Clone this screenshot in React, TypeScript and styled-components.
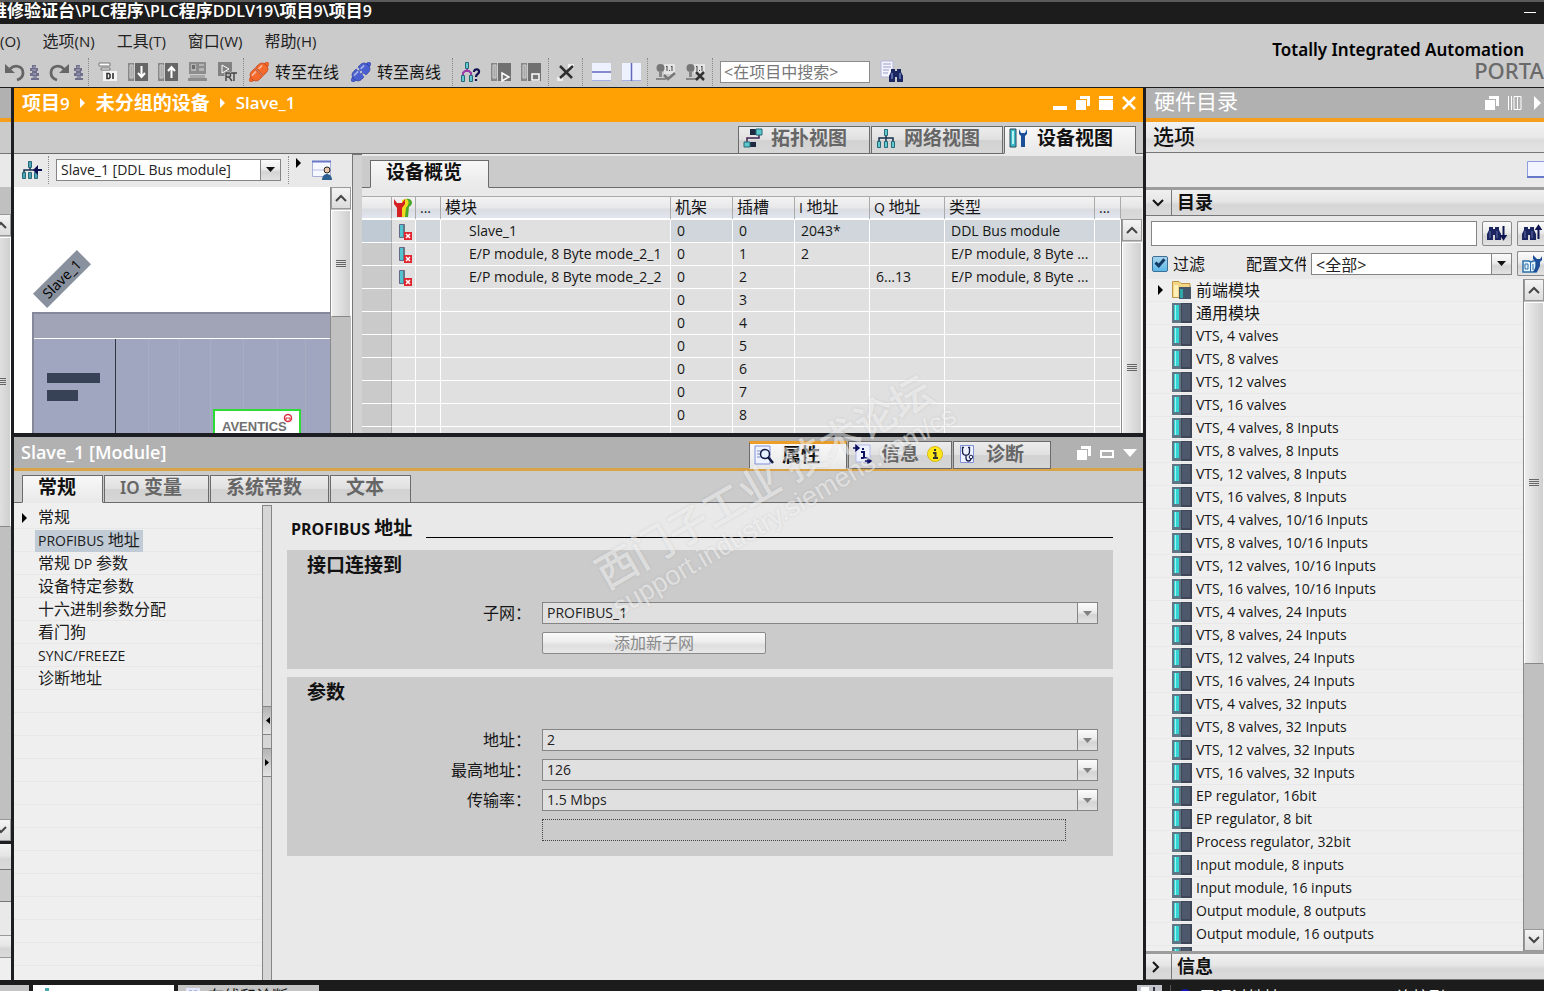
import React from 'react';
import styled, { createGlobalStyle, css } from 'styled-components';

const latin = '"Open Sans", "Noto Sans CJK SC", sans-serif';
const display = '"Noto Sans", "Noto Sans CJK SC", sans-serif';

const GlobalStyle = createGlobalStyle`
  *, *::before, *::after { box-sizing: border-box; }
  body { margin: 0; overflow: hidden; background: #1c1e22; font-family: ${latin}; font-size: 14px; color: #161616; }
  button, input, select { font-family: inherit; font-size: inherit; color: inherit; margin: 0; padding: 0; border-radius: 0; }
  button { border: 0; background: none; cursor: pointer; }
  svg { display: block; flex: none; }
  h1, h2, h3, ul { margin: 0; padding: 0; font-size: inherit; font-weight: inherit; list-style: none; }
`;

const bar = 'linear-gradient(#f0f0f0, #e6e6e6 45%, #d6d6d6 60%, #dadada)';
const face = 'linear-gradient(#fbfbfb, #ececec 45%, #d4d4d4 60%, #e2e2e2)';

/* ---------- page frame ---------- */
const Page = styled.div`
  position: relative;
  height: 100vh;
  display: flex;
  flex-direction: column;
  overflow: hidden;
`;
const TitleBar = styled.header`
  height: 24px;
  flex: none;
  display: flex;
  align-items: flex-start;
  justify-content: space-between;
  background: #1c1c1c;
  border-top: 2px solid #5a5a5a;
  color: #fff;
`;
const TitlePath = styled.h1`
  width: 372px;
  height: 20px;
  display: flex;
  justify-content: flex-end;
  overflow: hidden;
  white-space: nowrap;
  font-size: 16px;
  font-weight: 600;
  line-height: 17px;
`;
const Minimise = styled.button`
  width: 20px;
  height: 22px;
  display: flex;
  align-items: center;
`;
const Zh = styled.span<{ $size: number }>`
  font-size: ${(p) => p.$size}px;
`;
const Top = styled.div`
  height: 64px;
  flex: none;
  display: flex;
  justify-content: space-between;
  background: #cbcbcb;
  border-bottom: 1px solid #1c1e22;
  overflow: hidden;
`;
const Menu = styled.nav`
  display: flex;
  gap: 22px;
  height: 34px;
  align-items: center;
  button { font-size: 15px; line-height: 24px; white-space: nowrap; color: #222; }
`;
const Toolbar = styled.div`
  display: flex;
  align-items: center;
  height: 28px;
  padding-left: 5px;
`;
const Tools = styled.div<{ $gap: number }>`
  display: flex;
  align-items: center;
  gap: ${(p) => p.$gap}px;
`;
const ToolButton = styled.button`
  display: flex;
  align-items: center;
  gap: 6px;
  height: 24px;
  font-size: 16px;
  line-height: 20px;
  white-space: nowrap;
`;
const Sep = styled.span<{ $before: number; $after: number }>`
  height: 28px;
  margin: 0 ${(p) => p.$after}px 0 ${(p) => p.$before}px;
  border-left: 1px dotted #8a8a8a;
`;
const ProjectSearch = styled.input`
  width: 150px;
  height: 22px;
  margin-right: 10px;
  padding: 0 3px;
  border: 1px solid #8c8c8c;
  background: #fff;
  font-size: 16px;
  &::placeholder { color: #777; opacity: 1; }
`;
const Brand = styled.div`
  flex: none;
  padding-top: 16px;
  text-align: right;
  color: #000;
  font-family: ${display};
`;
const BrandName = styled.div`
  padding-right: 20px;
  font-size: 17px;
  font-weight: 600;
  line-height: 20px;
`;
const BrandPortal = styled.div`
  font-size: 22px;
  font-weight: 500;
  line-height: 20px;
  color: #6a6a6a;
`;
const Main = styled.main`
  flex: 1;
  min-height: 0;
  display: flex;
  gap: 3px;
`;

/* ---------- scroll bars ---------- */
const Track = styled.div`
  width: 21px;
  flex: none;
  display: flex;
  flex-direction: column;
  overflow: hidden;
  background: #c0c0c0;
  border-left: 1px solid #8a8a8a;
`;
const ScrollButton = styled.button`
  height: 22px;
  flex: none;
  display: flex;
  align-items: center;
  justify-content: center;
  background: linear-gradient(#f4f4f4, #dcdcdc);
  border: 1px solid #fff;
  border-bottom: 1px solid #8a8a8a;
  outline: 1px solid #999;
  outline-offset: -1px;
`;
const Thumb = styled.div<{ $height: number }>`
  height: ${(p) => p.$height}px;
  flex: none;
  display: flex;
  align-items: center;
  justify-content: center;
  margin-top: 1px;
  background: linear-gradient(90deg, #ededed, #cfcfcf);
  border: 1px solid #fff;
  border-bottom-color: #888;
`;
const Fill = styled.div`
  flex: 1;
`;
const Chevron = ({ down = false }: { down?: boolean }) => (
  <svg width="12" height="8" viewBox="0 0 12 8" fill="none" stroke="#444" strokeWidth="2">
    <path d={down ? 'M1 1l5 5 5-5' : 'M1 7l5-5 5 5'} />
  </svg>
);
const Grip = () => (
  <svg width="10" height="8" viewBox="0 0 10 8" stroke="#666" shapeRendering="crispEdges">
    <path d="M0 .5h10M0 2.500h10M0 4.500h10M0 6.500h10" />
  </svg>
);
const ScrollBar = ({ thumb, end = false }: { thumb: number; end?: boolean }) => (
  <Track>
    <ScrollButton aria-label="向上滚动"><Chevron /></ScrollButton>
    <Thumb $height={thumb}><Grip /></Thumb>
    <Fill />
    {end && <ScrollButton aria-label="向下滚动"><Chevron down /></ScrollButton>}
  </Track>
);

/* ---------- project tree, scrolled almost out of view ---------- */
const Edge = styled.aside`
  width: 11px;
  flex: none;
  display: flex;
  flex-direction: column;
  overflow: hidden;
  background: #c2c2c0;
`;
const EdgeBand = styled.div<{ $h: number; $bg: string; $line?: string }>`
  height: ${(p) => p.$h}px;
  flex: none;
  background: ${(p) => p.$bg};
  border-bottom: ${(p) => (p.$line ? `1px solid ${p.$line}` : '0')};
`;
const EdgeScroll = styled.div`
  flex: 1;
  min-height: 0;
  display: flex;
  justify-content: flex-end;
`;

/* ---------- editor ---------- */
const Centre = styled.section`
  flex: 1;
  min-width: 0;
  display: flex;
  flex-direction: column;
  gap: 4px;
`;
const Editor = styled.section`
  height: 345px;
  flex: none;
  display: flex;
  flex-direction: column;
  background: #e9e9e9;
`;
const EditorHead = styled.div`
  height: 34px;
  flex: none;
  display: flex;
  align-items: center;
  justify-content: space-between;
  padding: 0 7px 4px 8px;
  background: #ffa005;
  color: #fff;
`;
const Crumbs = styled.div`
  display: flex;
  align-items: center;
  gap: 10px;
  font-size: 17px;
  font-weight: 600;
  line-height: 26px;
  white-space: nowrap;
`;
const WindowButtons = styled.div`
  display: flex;
  align-items: center;
  gap: 9px;
`;
const TabStrip = styled.div<{ $align?: string; $pad: string; $height: number }>`
  height: ${(p) => p.$height}px;
  flex: none;
  display: flex;
  align-items: flex-end;
  justify-content: ${(p) => p.$align || 'flex-start'};
  gap: 1px;
  padding: ${(p) => p.$pad};
  background: linear-gradient(#6b6b6b, #6b6b6b) bottom / 100% 1px no-repeat #cbcbcb;
`;
const Tab = styled.button<{ $on?: boolean; $width: number; $accent?: boolean }>`
  width: ${(p) => p.$width}px;
  height: 28px;
  flex: none;
  display: flex;
  align-items: center;
  gap: 8px;
  padding: 0 0 ${(p) => (p.$accent ? 2 : 4)}px ${(p) => (p.$accent === undefined ? 15 : 4)}px;
  border: 1px solid #6b6b6b;
  background: linear-gradient(#ececec, #e0e0e0 50%, #d2d2d2 52%, #d6d6d6);
  color: #666;
  font-family: ${display};
  font-size: 19px;
  font-weight: 600;
  line-height: 22px;
  white-space: nowrap;
  ${(p) => p.$on && css`
    background: linear-gradient(#f8f8f8, #e9e9e9);
    border-bottom-color: #e9e9e9;
    color: #111;
  `}
  ${(p) => p.$on && p.$accent && css`
    border-top: 3px solid #eb9e28;
  `}
`;
const EditorBody = styled.div`
  flex: 1;
  min-height: 0;
  display: flex;
`;
const DevicePane = styled.div`
  width: 338px;
  flex: none;
  display: flex;
  flex-direction: column;
`;
const DeviceTools = styled.div`
  height: 33px;
  flex: none;
  display: flex;
  align-items: center;
  padding: 0 0 2px 8px;
`;
const MoreButton = styled.button`
  align-self: flex-start;
  margin-right: 10px;
  padding-top: 4px;
`;
const Canvas = styled.div`
  flex: 1;
  min-height: 0;
  display: flex;
  background: #fff;
  overflow: hidden;
`;
const Combo = styled.span<{ $dim?: boolean; $width?: number }>`
  display: flex;
  height: 22px;
  ${(p) => (p.$width ? `width: ${p.$width}px; flex: none;` : 'flex: 1; min-width: 0;')}
  border: 1px solid #858585;
  background: ${(p) => (p.$dim ? '#e0e0e0' : '#fff')};
  select {
    flex: 1;
    min-width: 0;
    appearance: none;
    border: 0;
    padding: 0 4px 1px;
    background: transparent;
    color: #222;
    font-size: inherit;
  }
`;
const ComboArrow = styled.span`
  width: 20px;
  flex: none;
  display: flex;
  align-items: center;
  justify-content: center;
  border-left: 1px solid #858585;
  background: ${face};
`;
const Splitter = styled.div`
  width: 10px;
  flex: none;
  background: #d2d2d2;
  border-left: 1px solid #777;
  border-top: 1px solid #777;
`;
const OverviewPane = styled.div`
  flex: 1;
  min-width: 0;
  display: flex;
  flex-direction: column;
  padding-top: 2px;
`;
const OverviewBody = styled.div`
  flex: 1;
  min-height: 0;
  display: flex;
  padding: 8px 1px 0 0;
  overflow: hidden;
`;
const TableArea = styled.div`
  flex: 1;
  min-width: 0;
  overflow: hidden;
`;
const ScrollColumn = styled.div`
  display: flex;
  flex-direction: column;
`;
const ScrollHead = styled.div`
  height: 23px;
  flex: none;
  background: ${bar};
  border-top: 1px solid #aaa;
`;
const ScrollBody = styled.div`
  flex: 1;
  min-height: 0;
  display: flex;
`;
const Overview = styled.table`
  width: 100%;
  table-layout: fixed;
  border-collapse: separate;
  border-spacing: 0;
  th, td {
    height: 23px;
    padding: 0 0 0 6px;
    overflow: hidden;
    white-space: nowrap;
    text-align: left;
    font-weight: 400;
    line-height: 20px;
  }
  th {
    padding-left: 4px;
    background: linear-gradient(#f3f3f3, #e8e8ea 50%, #d9dce2 60%, #e2e6ee);
    border-top: 1px solid #aaa;
    border-right: 1px solid #aaa;
    border-bottom: 2px solid #fff;
  }
  th:nth-child(2) { padding-left: 2px; }
  td {
    background: #e0e0e0;
    border-right: 1px solid #fff;
    border-bottom: 1px solid #fff;
  }
  td:first-child { background: #cacaca; border-right-color: #aaa; }
  td:nth-child(4) { padding-left: 28px; }
`;
const Row = styled.tr<{ $selected?: boolean }>`
  ${(p) => p.$selected && css`
    && td { background: #d0d6db; }
    && td:first-child { background: #bfcad5; }
    && td:nth-child(2), && td:nth-child(4) { background: #e0e0e0; }
  `}
`;

/* ---------- inspector ---------- */
const Inspector = styled.section`
  flex: 1;
  min-height: 0;
  display: flex;
  flex-direction: column;
  background: #e9e9e9;
`;
const InspectorHead = styled.div`
  height: 34px;
  flex: none;
  display: flex;
  align-items: flex-end;
  background: linear-gradient(#d9a347, #d9a347) bottom / 100% 3px no-repeat #b1b1b1;
`;
const InspectorTitle = styled.h2`
  flex: 1;
  padding: 0 7px 8px;
  color: #fff;
  font-size: 18px;
  font-weight: 600;
  line-height: 22px;
`;
const InspectorTabs = styled.div`
  display: flex;
  gap: 1px;
  padding-bottom: 2px;
`;
const InspectorButtons = styled.div`
  width: 92px;
  display: flex;
  align-items: center;
  justify-content: flex-end;
  gap: 9px;
  padding: 0 6px 11px 0;
`;
const InspectorBody = styled.div`
  flex: 1;
  min-height: 0;
  display: flex;
`;
const NavList = styled.ul`
  width: 248px;
  flex: none;
  padding-top: 3px;
  background: repeating-linear-gradient(#efefef 0 22px, #e7e7e7 22px 23px) 0 3px #efefef;
`;
const NavItem = styled.li`
  height: 23px;
  display: flex;
  align-items: center;
  padding-left: 8px;
  gap: 7px;
`;
const NavLink = styled.a<{ $on?: boolean }>`
  padding: 0 3px;
  line-height: 21px;
  height: 22px;
  color: #1c1c1c;
  text-decoration: none;
  white-space: nowrap;
  background: ${(p) => (p.$on ? '#c1cbd6' : 'transparent')};
`;
const Marker = styled.span`
  width: 6px;
  flex: none;
`;
const PaneSplitter = styled.div`
  width: 10px;
  flex: none;
  display: flex;
  flex-direction: column;
  margin-top: 2px;
  border: 1px solid #858585;
  border-bottom: 0;
  background: #d6d6d6;
`;
const SplitSpace = styled.div`
  height: 200px;
  flex: none;
`;
const SplitButton = styled.button`
  height: 29px;
  flex: none;
  display: flex;
  align-items: center;
  justify-content: center;
  margin-bottom: 13px;
  border: solid #858585;
  border-width: 1px 0;
  background: linear-gradient(#b4b4b4, #e4e4e4);
`;
const Form = styled.form`
  flex: 1;
  min-width: 0;
  display: flex;
  flex-direction: column;
  gap: 8px;
  padding: 12px 30px 0 15px;
`;
const FormTitle = styled.h2`
  display: flex;
  align-items: center;
  gap: 14px;
  height: 27px;
  padding-left: 4px;
  color: #111;
  font-size: 16px;
  font-weight: 700;
  line-height: 26px;
  white-space: nowrap;
`;
const Rule = styled.span`
  flex: 1;
  height: 18px;
  border-bottom: 1px solid #000;
`;
const Group = styled.fieldset`
  min-width: 0;
  display: flex;
  flex-direction: column;
  gap: 8px;
  margin: 0;
  padding: 0 15px 15px 20px;
  border: 0;
  background: #cbcbcb;
`;
const GroupTitle = styled.h3`
  height: 44px;
  padding-top: 3px;
  color: #111;
  font-size: 19px;
  font-weight: 600;
  line-height: 24px;
`;
const Field = styled.div`
  height: 22px;
  display: flex;
  align-items: center;
  gap: 11px;
`;
const FieldLabel = styled.label`
  width: 224px;
  flex: none;
  text-align: right;
  font-size: 16px;
  line-height: 22px;
`;
const AddSubnet = styled.button`
  width: 224px;
  height: 22px;
  border: 1px solid #8a8a8a;
  border-radius: 2px;
  background: linear-gradient(#fafafa, #ededed 45%, #dedede 60%, #e8e8e8);
  color: #8a8a8a;
  font-size: 16px;
  line-height: 18px;
`;
const EmptyField = styled.div`
  flex: 1;
  height: 22px;
  margin-right: 32px;
  border: 1px dotted #444;
`;

/* ---------- hardware catalogue ---------- */
const Catalog = styled.aside`
  width: 398px;
  flex: none;
  display: flex;
  flex-direction: column;
  overflow: hidden;
  background: #e9e9e9;
`;
const CatalogHead = styled.div`
  height: 34px;
  flex: none;
  display: flex;
  align-items: center;
  justify-content: space-between;
  padding: 0 1px 0 8px;
  background: #b1b1b1;
  border-bottom: 4px solid #f79f1c;
  color: #fff;
  font-size: 21px;
  line-height: 26px;
`;
const CatalogTitle = styled.h2`
  height: 30px;
`;
const OptionsHead = styled.h2`
  height: 31px;
  flex: none;
  padding-left: 7px;
  background: linear-gradient(#f2f2f2, #e8e8e8 50%, #dcdcdc 60%, #e4e4e4);
  border-bottom: 1px solid #777;
  color: #111;
  font-size: 21px;
  font-weight: 500;
  line-height: 29px;
`;
const OptionsTools = styled.div`
  height: 34px;
  flex: none;
  display: flex;
  justify-content: flex-end;
  align-items: center;
`;
const SectionHead = styled.button`
  height: 29px;
  flex: none;
  display: flex;
  align-items: center;
  border-top: 3px solid #9c9c9c;
  border-bottom: 1px solid #777;
  background: ${bar};
  color: #111;
  font-size: 18px;
  font-weight: 700;
  text-align: left;
`;
const SectionMark = styled.span`
  width: 26px;
  height: 25px;
  display: flex;
  align-items: center;
  padding-left: 6px;
  border-right: 1px solid #777;
`;
const SectionName = styled.span`
  padding-left: 5px;
  line-height: 25px;
`;
const FindRow = styled.div`
  height: 34px;
  flex: none;
  display: flex;
  align-items: center;
  gap: 5px;
  padding-left: 5px;
`;
const FindBox = styled.input`
  flex: 1;
  min-width: 0;
  height: 25px;
  padding: 0 4px;
  border: 1px solid #858585;
  background: #fff;
`;
const SquareButton = styled.button<{ $cut?: boolean }>`
  width: ${(p) => (p.$cut ? 27 : 30)}px;
  height: 25px;
  flex: none;
  display: flex;
  align-items: center;
  padding-left: 4px;
  border: 1px solid #8a8a8a;
  border-right-width: ${(p) => (p.$cut ? 0 : 1)}px;
  border-radius: ${(p) => (p.$cut ? '2px 0 0 2px' : '2px')};
  background: ${face};
  overflow: hidden;
`;
const FilterRow = styled.div`
  height: 29px;
  flex: none;
  display: flex;
  align-items: center;
  gap: 5px;
  padding: 0 0 2px 6px;
  font-size: 16px;
  label { line-height: 24px; white-space: nowrap; }
`;
const Check = styled.input`
  appearance: none;
  width: 16px;
  height: 16px;
  flex: none;
  display: grid;
  place-items: center;
  border: 1px solid #3a6f98;
  border-radius: 2px;
  background: linear-gradient(#a8d4ec, #5cb8e8);
  &:checked::after {
    content: '';
    width: 10px;
    height: 6px;
    margin-bottom: 3px;
    border: solid #143a66;
    border-width: 0 0 3px 3px;
    transform: rotate(-48deg);
  }
`;
const ProfileLabel = styled.label`
  width: 60px;
  margin-left: 36px;
  overflow: hidden;
`;
const CatalogBody = styled.div`
  flex: 1;
  min-height: 0;
  display: flex;
`;
const CatalogList = styled.ul`
  flex: 1;
  min-width: 0;
  overflow: hidden;
  background: #efefef;
`;
const CatalogItem = styled.li`
  height: 23px;
  display: flex;
  align-items: center;
  padding-left: 12px;
  border-bottom: 1px solid #e8e8e8;
  white-space: nowrap;
  line-height: 22px;
`;
const ItemMark = styled.span`
  width: 14px;
  flex: none;
`;
const ItemName = styled.span`
  padding-left: 4px;
`;

/* ---------- task bar and overlay ---------- */
const TaskBar = styled.footer`
  height: 11px;
  flex: none;
  display: flex;
  gap: 4px;
  padding-top: 5px;
  overflow: hidden;
  background: #1c1c1c;
`;
const Task = styled.button<{ $bg: string; $width: number }>`
  width: ${(p) => p.$width}px;
  height: 26px;
  flex: none;
  display: flex;
  align-items: flex-start;
  gap: 8px;
  padding: 3px 8px;
  background: ${(p) => p.$bg};
  font-size: 16px;
  line-height: 16px;
  white-space: nowrap;
`;
const Message = styled.div`
  width: 407px;
  flex: none;
  display: flex;
  gap: 7px;
  margin-left: auto;
  color: #fff;
  font-size: 16px;
  line-height: 18px;
  white-space: nowrap;
`;
const MessageIcon = styled.span`
  width: 34px;
  height: 20px;
  flex: none;
  border-right: 1px solid #555;
`;
const MessageText = styled.span`
  width: 190px;
  flex: none;
  padding-top: 3px;
`;
const Watermark = styled.div`
  position: absolute;
  top: 50%;
  left: 50%;
  transform: translate(-50%, -50%) rotate(-30deg);
  pointer-events: none;
  white-space: pre;
  text-align: center;
  color: rgba(255, 255, 255, 0.5);
  text-shadow: 0 0 3px rgba(90, 90, 90, 0.16);
  font-family: "Liberation Sans", "Noto Sans CJK SC", sans-serif;
`;
const MarkZh = styled.div`
  font-size: 41px;
  font-weight: 500;
  line-height: 38px;
`;
const MarkUrl = styled.div`
  padding-left: 6px;
  font-size: 27px;
  line-height: 30px;
`;

/* ---------- drawings ---------- */
const S = ({ w = 20, h = 20, children }: { w?: number; h?: number; children: React.ReactNode }) => (
  <svg width={w} height={h} viewBox={`0 0 ${w} ${h}`} fill="none">{children}</svg>
);
const Undo = ({ flip = false }: { flip?: boolean }) => (
  <S>
    <g transform={flip ? 'matrix(-1 0 0 1 20 0)' : undefined}>
      <path d="M5 7c5-5 13-3 13 4 0 4-3 6-6 7" stroke="#666" strokeWidth="2.800" />
      <path d="M0 2v9h10z" fill="#666" />
    </g>
  </S>
);
const Steps = () => (
  <S w={11}>
    <path d="M3 3h4v3h2v3H8v2h2v3H8v2h2v2H2v-2h2v-2H1v-3h2V9H1V6h2z" fill="#70708c" />
    <path d="M4 5h3M3 8h4M4 12h3M3 15h5" stroke="#aaaabf" />
  </S>
);
const Compile = () => (
  <S>
    <path d="M1 1h11v3H1zM3 6h9v2H3z" fill="#fff" stroke="#777" />
    <path d="M5 9h14v10H5z" fill="#f4f4f4" />
    <path d="M9 11.500h2l1 1v3l-1 1H9zM15 11v6" stroke="#333" strokeWidth="1.600" />
  </S>
);
const Transfer = ({ up = false }: { up?: boolean }) => (
  <S>
    <path d="M0 1h6v18H0z" fill="#888" />
    <path d="M2 3h3v13H2z" fill="#aaa" stroke="#ccc" />
    <path d="M7 1h13v18H7z" fill="#666" />
    <path d={up ? 'M13.500 16V6M10 9l3.500-4L17 9' : 'M13.500 4v10M10 11l3.500 4 3.500-4'} stroke="#fff" strokeWidth="2" />
  </S>
);
const Simulate = () => (
  <S>
    <path d="M1 0h17v12H1z" fill="#8c8c8c" />
    <path d="M3 2h5v7H3zM11 2h5v2h-5zM11 6h5v3h-5z" fill="#b4b4b4" />
    <path d="M4 3h3v4H4z" fill="#6c6c6c" />
    <path d="M2 13h15v3H2z" fill="#a8a8a8" />
    <path d="M0 16h19v3H0z" fill="#8c8c8c" />
  </S>
);
const StartRt = () => (
  <S>
    <path d="M0 0h14v14H0z" fill="#828282" />
    <path d="M4 3l7 4-7 4z" stroke="#fff" />
    <path d="M8 19v-8h3c2 0 2 4 0 4H8m3 0l3 4M13 11h6M16 11v8" stroke="#cbcbcb" strokeWidth="3" />
    <path d="M8 19v-8h3c2 0 2 4 0 4H8m3 0l3 4M13 11h6M16 11v8" stroke="#444" strokeWidth="1.400" />
  </S>
);
const Plug = ({ fill, edge, split = false }: { fill: string; edge: string; split?: boolean }) => (
  <S>
    <g transform="rotate(-45 10 10)">
      <path d="M-3 8h4v4h-4zM19 8h4v4h-4z" fill={fill} stroke={edge} strokeWidth=".6" />
      <path d="M9.500 4.500v11H5c-3 0-5-2.500-5-5.500s2-5.500 5-5.500z" fill={fill} stroke={edge} strokeWidth=".8" />
      <path d="M10.500 4.500v11H15c3 0 5-2.500 5-5.500s-2-5.500-5-5.500z" fill={fill} stroke={edge} strokeWidth=".8" />
      <path d="M2.500 7.500h6M12 7.500h5" stroke="#fff" strokeOpacity=".5" strokeWidth="1.800" />
      {split && <path d="M10 3v4M10 9v2M10 13v4" stroke="#cbcbcb" strokeWidth="2" />}
    </g>
  </S>
);
const Network = ({ ask = false }: { ask?: boolean }) => (
  <S>
    <path d={ask ? 'M6 6v3M2 14v-3l2-2h4l2 2v3' : 'M10 6v7M3 13v-3h14v3'} stroke={ask ? '#9a3aa8' : '#14304c'} strokeWidth={ask ? 2 : 1.5} />
    <path d={ask ? 'M4.500 .5h3v6h-3zM.5 13.500h3v6h-3zM8.500 13.500h3v6h-3z' : 'M8.500 1.500h3v6h-3zM1.500 13.500h3v6h-3zM8.500 13.500h3v6h-3zM15.500 13.500h3v6h-3z'} fill="#62c8cc" stroke="#246a78" />
    {ask && <path d="M13 10c0-4 6-3 5 0 0 2-3 2-3 5m0 2v2" stroke="#101050" strokeWidth="2.200" />}
  </S>
);
const NetworkBack = () => (
  <S>
    <path d="M8 6v4M2 13v-3h12v3" stroke="#14304c" strokeWidth="1.500" />
    <path d="M6.500 1.500h3v6h-3zM.5 12.500h3v6h-3zM6.500 12.500h3v6h-3zM12.500 12.500h3v6h-3z" fill="#4ea4b4" stroke="#246a78" />
    <path d="M20 9h-4V5l-5 5 5 5v-4h4z" fill="#0b1050" />
  </S>
);
const Cpu = ({ stop = false }: { stop?: boolean }) => (
  <S>
    <path d="M0 1h6v18H0z" fill="#888" />
    <path d="M2 3h3v13H2z" fill="#aaa" stroke="#ccc" />
    <path d="M7 1h13v18H7z" fill="#707070" />
    <path d={stop ? 'M11 12h7v6h-7z' : 'M11 11l7 4-7 4z'} fill="#777" stroke="#fff" strokeWidth="1.500" />
  </S>
);
const Cross = () => (
  <S>
    <path d="M1 15h6v4H1zM12 2h6v5h-6z" fill="#eee" />
    <path d="M4 4l12 12M17 4L4 16" stroke="#2f2f2f" strokeWidth="2.500" />
  </S>
);
const SplitView = ({ vertical = false }: { vertical?: boolean }) => (
  <S>
    <path d="M0 1h19v18H0z" fill="#eef1ff" />
    <path d="M0 18.500h19" stroke="#a8b0e8" />
    <path d={vertical ? 'M9.500 1v18' : 'M0 10h19'} stroke="#6068b8" strokeWidth="1.500" />
  </S>
);
const Force = ({ off = false }: { off?: boolean }) => (
  <S>
    <path d="M8 2h11v10H8z" fill="#e4e4e4" />
    <path d="M11 4v5M16 4v5M10 5l1-1M15 5l1-1M13.500 8v1" stroke="#444" />
    <circle cx="4.500" cy="6" r="4" fill="#777" />
    <path d="M3 9h3v6H3zM0 16h10v2H0z" fill="#888" />
    <path d={off ? 'M10 10l8 8M18 10l-8 8' : 'M8 13l4 4 7-6'} stroke={off ? '#333' : '#777'} strokeWidth="2.500" />
  </S>
);
const bino = 'M2 5h4v2h2V5h4v3l2 4v6H8v-5H6v5H0v-6l2-4z';
const FindInProject = () => (
  <S w={24} h={24}>
    <path d="M1 1h12v16H1z" fill="#f4f5ff" stroke="#b4b8dc" />
    <path d="M3 4h8M3 7h8M3 10h6M3 13h5" stroke="#9a9cc8" />
    <path d={bino} transform="translate(9 4)" fill="#1b2560" />
    <path d="M12 13v6M20 13v6" stroke="#5a68a8" strokeWidth="2" />
  </S>
);
const FindStep = ({ up = false }: { up?: boolean }) => (
  <S>
    <path d={bino} transform="translate(0 -1)" fill="#1b2560" />
    <path d="M3 8v7M10 8v7" stroke="#6470a8" />
    <path d={up ? 'M16.500 16V5M14.500 6l2-3 2 3z' : 'M16.500 3v11M14.500 13l2 3 2-3z'} stroke="#0d1450" strokeWidth="2" fill="#0d1450" />
  </S>
);
const ProfileIcon = () => (
  <S>
    <path d="M1 7h6l2 1 2-1h3v11H1z" fill="#e6f4ff" stroke="#2b6fa8" strokeWidth="1.500" />
    <path d="M8.500 8v10M3 10h3v5H3zM11 10v6" stroke="#2b6fa8" />
    <path d="M11 1v4l3 3v4l-3 6h4l3-6V8l3-3V1l-3 4h-3z" fill="#1d4f98" />
  </S>
);
const PersonWindow = () => (
  <S>
    <path d="M.5 1.500h18v15H.5z" fill="#f6f8ff" stroke="#a8b0d8" />
    <path d="M0 1.500h19" stroke="#6878c8" strokeWidth="2" />
    <path d="M1 10h10" stroke="#b8c0e8" />
    <circle cx="15" cy="10" r="3" fill="#e8c8a8" stroke="#222" />
    <path d="M10 20c0-8 10-8 10 0z" fill="#2d5f90" />
  </S>
);
const Topology = () => (
  <S>
    <path d="M16 7v3H4v5" stroke="#40204c" strokeWidth="1.500" />
    <path d="M7 1h6v6H7zM7 14h6v5H7z" fill="#202a40" />
    <path d="M13 1h6v6h-6zM1 14h6v5H1z" fill="#5cc8cc" stroke="#246a78" />
  </S>
);
const DeviceIcon = () => (
  <S>
    <path d="M1 1h6v18H1z" fill="#3bb8c8" stroke="#2a4858" />
    <path d="M3 3h2v13H3z" fill="#b8f4f4" />
    <path d="M10 1v5l2 2v11h4V8l2-2V1l-2 4h-4z" fill="#1d4f98" />
  </S>
);
const PropertiesIcon = () => (
  <S>
    <path d="M1 1h15v18H1z" fill="#eef2ff" stroke="#8090d8" />
    <path d="M3 6h4M3 9h3M3 12h4" stroke="#8090c0" />
    <circle cx="11" cy="9" r="4.500" fill="#e8f2ff" stroke="#101840" strokeWidth="1.500" />
    <path d="M14 12l5 6" stroke="#101840" strokeWidth="2.500" />
  </S>
);
const InfoIcon = () => (
  <S>
    <path d="M3 1h14v17H3z" fill="#eef2ff" stroke="#b0b8e8" />
    <path d="M0 4h4M3 1.500L6 4 3 6.500zM12 17h4M15 14.500l3 2.500-3 2.500z" stroke="#0c1060" strokeWidth="1.500" fill="#0c1060" />
    <path d="M8 8h3v6M8 14h6M10 4v2" stroke="#0c1060" strokeWidth="2" />
  </S>
);
const InfoBadge = () => (
  <S w={16} h={16}>
    <circle cx="8" cy="8" r="7.500" fill="#ffe818" stroke="#d8b818" />
    <path d="M6 7h2.500v5M6 12h5M8 3v2" stroke="#333" strokeWidth="2" />
  </S>
);
const DiagnosticsIcon = () => (
  <S>
    <path d="M2.500 1.500h13v17h-13z" fill="#eef2ff" stroke="#8090d8" />
    <path d="M6 3.500H4.500v4c0 5 7 5 7 0v-4H10M8 11v3c0 4 5 4 5 0" stroke="#18204c" strokeWidth="1.300" />
    <circle cx="13" cy="13" r="1.800" stroke="#18204c" />
  </S>
);
const ModuleIcon = () => (
  <S>
    <path d="M0 0h9v20H0z" fill="#5f7684" />
    <path d="M2 2h5v15H2z" fill="#35d3d4" />
    <path d="M3 2h1v15H3z" fill="#a4f2ee" />
    <path d="M9 0h11v20H9z" fill="#3e4658" />
    <path d="M10 1h8v17h-8z" fill="#4e586c" />
  </S>
);
const FolderIcon = () => (
  <S>
    <path d="M.5 1.500H7l2 2h9v14H.5z" fill="#f5d684" stroke="#b89848" />
    <path d="M2 5h4v12H2z" fill="#fff0b8" />
    <path d="M7 7h12v12H7z" fill="#46566a" />
    <path d="M8 9h3v9H8z" fill="#2fa8a8" />
  </S>
);
const RowIcon = () => (
  <S w={14} h={18}>
    <path d="M1.500 2.500h5v13h-5z" fill="#51c4d0" stroke="#668" />
    <path d="M5 3h2v13H5z" fill="#667888" />
    <path d="M6 10h8v8H6z" fill="#e02430" />
    <path d="M8 12l4 4M12 12l-4 4" stroke="#fff" strokeWidth="1.500" />
  </S>
);
const Wrenches = () => (
  <S w={18}>
    <path d="M11 1c5-1 7 1 7 4 0 2-2 3-3 4l-1 10h-4l1-11c2-2 3-4 0-7z" fill="#4aa828" />
    <path d="M8 2l4-1c3 1 3 4 2 6l-2 3-1 9H7z" fill="#f0d820" />
    <path d="M0 1v5l3 4v9h5v-9l3-4V1L8 5H3z" fill="#d42020" />
  </S>
);
const Triangle = ({ fill = '#000' }: { fill?: string }) => (
  <S w={6} h={10}><path d="M0 0v10l5-5z" fill={fill} /></S>
);
const SmallTriangle = ({ left = false }: { left?: boolean }) => (
  <S w={5} h={7}><path d={left ? 'M5 0v7L1 3.500z' : 'M0 0v7l4-3.500z'} fill="#000" /></S>
);
const DownArrow = ({ dim = false }: { dim?: boolean }) => (
  <S w={9} h={5}><path d="M0 0h9L4.500 5z" fill={dim ? '#808080' : '#111'} /></S>
);
const Restore = () => (
  <S w={14} h={14}>
    <path d="M4 0h10v10h-3V3H4z" fill="#fff" />
    <path d="M0 4h10v10H0z" fill="#fff" />
  </S>
);

const Rack = () => (
  <svg width="316" height="246" viewBox="0 0 316 246">
    <g transform="translate(48 92) rotate(-45)">
      <rect x="-31" y="-10" width="62" height="20" fill="#8a919e" />
      <text x="0" y="5" textAnchor="middle" fontSize="14" fill="#000">Slave_1</text>
    </g>
    <rect x="18" y="125" width="300" height="123" fill="#848898" />
    <rect x="20" y="127" width="298" height="121" fill="#a1a4b6" />
    <rect x="20" y="152" width="298" height="96" fill="#a0a6c0" />
    <path d="M20 151.500h296" stroke="#fff" />
    <path d="M101.500 152v94" stroke="#303640" />
    <path d="M134.500 152v94M165.500 152v94M196.500 152v94M229.500 152v94M263.500 152v94M291.500 152v94" stroke="#a9adc2" />
    <path d="M33 186h53v10H33zM33 203h31v11H33z" fill="#384256" />
    <rect x="200" y="223" width="86" height="30" fill="#fff" stroke="#2fdc34" strokeWidth="2" />
    <text x="208" y="244" fontSize="13" fontWeight="700" fill="#707070" fontFamily="Liberation Sans, sans-serif">AVENTICS</text>
    <circle cx="274" cy="231" r="3.500" fill="#fff" stroke="#d8303c" strokeWidth="1.500" />
    <path d="M272 233v-2h4v2" fill="none" stroke="#d8303c" />
  </svg>
);

/* ---------- content ---------- */
const mixed = (text: string, size: number) =>
  text.split(/([\u3000-\u9fff]+)/).map((part, i) => (i % 2 ? <Zh key={i} $size={size}>{part}</Zh> : part));

const columnWidths = [30, 24, 25, 0, 62, 62, 75, 75, 150, 26];
const overviewRows: string[][] = [
  ['Slave_1', '0', '0', '2043*', '', 'DDL Bus module'],
  ['E/P module, 8 Byte mode_2_1', '0', '1', '2', '', 'E/P module, 8 Byte ...'],
  ['E/P module, 8 Byte mode_2_2', '0', '2', '', '6...13', 'E/P module, 8 Byte ...'],
  ...['3', '4', '5', '6', '7', '8', ''].map((n) => ['', n ? '0' : '', n, '', '', '']),
];
const inputVariants = ['', ', 8 Inputs', ', 10/16 Inputs', ', 24 Inputs', ', 32 Inputs'];
const catalogItems = [
  '前端模块',
  '通用模块',
  ...inputVariants.flatMap((v) => [4, 8, 12, 16].map((n) => `VTS, ${n} valves${v}`)),
  'EP regulator, 16bit',
  'EP regulator, 8 bit',
  'Process regulator, 32bit',
  'Input module, 8 inputs',
  'Input module, 16 inputs',
  'Output module, 8 outputs',
  'Output module, 16 outputs',
  '',
];
const navItems = ['常规', 'PROFIBUS 地址', '常规 DP 参数', '设备特定参数', '十六进制参数分配', '看门狗', 'SYNC/FREEZE', '诊断地址'];

const ComboBox = ({ id, value, dim, width, label }: { id: string; value: string; dim?: boolean; width?: number; label?: string }) => (
  <Combo $dim={dim} $width={width}>
    <select id={id} aria-label={label} defaultValue={value}><option>{value}</option></select>
    <ComboArrow><DownArrow dim={dim} /></ComboArrow>
  </Combo>
);
const ComboField = ({ id, label, value }: { id: string; label: string; value: string }) => (
  <Field>
    <FieldLabel htmlFor={id}>{label}：</FieldLabel>
    <ComboBox id={id} value={value} dim />
  </Field>
);

const EdgePanel = () => (
  <Edge>
    <EdgeBand $h={30} $bg="#b1b1b1" />
    <EdgeBand $h={4} $bg="#f79f1c" />
    <EdgeBand $h={32} $bg="#cbcbcb" $line="#777" />
    <EdgeBand $h={33} $bg="#e9e9e9" />
    <EdgeBand $h={27} $bg="#c0c0c0" />
    <EdgeScroll><ScrollBar thumb={290} end /></EdgeScroll>
    <EdgeBand $h={3} $bg="#1c1e22" />
    <EdgeBand $h={26} $bg={bar} $line="#777" />
    <EdgeBand $h={32} $bg="#cbcbcb" $line="#777" />
    <EdgeBand $h={34} $bg="#e9e9e9" $line="#999" />
    <EdgeBand $h={22} $bg={bar} $line="#999" />
    <EdgeBand $h={22} $bg="#efefef" />
  </Edge>
);

const EditorPanel = () => (
  <Editor>
    <EditorHead>
      <Crumbs>
        <span>{mixed('项目9', 19)}</span><Triangle fill="#fff" />
        <span>{mixed('未分组的设备', 19)}</span><Triangle fill="#fff" />
        <span>Slave_1</span>
      </Crumbs>
      <WindowButtons>
        <button aria-label="最小化"><S w={14} h={14}><path d="M0 10h14v4H0z" fill="#fff" /></S></button>
        <button aria-label="浮动"><Restore /></button>
        <button aria-label="最大化"><S w={14} h={14}><path d="M0 0h14v3H0zM0 4h14v10H0z" fill="#fff" /></S></button>
        <button aria-label="关闭"><S w={14} h={14}><path d="M1 1l12 12M13 1L1 13" stroke="#fff" strokeWidth="2.500" /></S></button>
      </WindowButtons>
    </EditorHead>
    <TabStrip $height={32} $align="flex-end" $pad="0 7px 0 0">
      <Tab $width={132} $accent={false}><Topology />拓扑视图</Tab>
      <Tab $width={132} $accent={false}><Network />网络视图</Tab>
      <Tab $width={132} $accent={false} $on><DeviceIcon />设备视图</Tab>
    </TabStrip>
    <EditorBody>
      <DevicePane>
        <DeviceTools>
          <button aria-label="网络"><NetworkBack /></button>
          <Sep $before={6} $after={7} />
          <ComboBox id="device" label="设备" value="Slave_1 [DDL Bus module]" width={225} />
          <Sep $before={7} $after={7} />
          <MoreButton aria-label="更多"><Triangle /></MoreButton>
          <button aria-label="显示"><PersonWindow /></button>
        </DeviceTools>
        <Canvas>
          <Rack />
          <ScrollBar thumb={107} />
        </Canvas>
      </DevicePane>
      <Splitter />
      <OverviewPane>
        <TabStrip $height={32} $pad="0 0 0 8px">
          <Tab $width={119} $on>设备概览</Tab>
        </TabStrip>
        <OverviewBody>
          <TableArea>
            <Overview>
              <colgroup>
                {columnWidths.map((w, i) => <col key={i} width={w || undefined} />)}
              </colgroup>
              <thead>
                <tr>
                  <th /><th><Wrenches /></th><th>...</th>
                  {['模块', '机架', '插槽', 'I 地址', 'Q 地址', '类型'].map((h) => <th key={h}>{mixed(h, 16)}</th>)}
                  <th>...</th>
                </tr>
              </thead>
              <tbody>
                {overviewRows.map((row, i) => (
                  <Row key={i} $selected={i === 0}>
                    <td /><td>{i < 3 && <RowIcon />}</td><td />
                    {row.map((cell, j) => <td key={j}>{cell}</td>)}
                    <td />
                  </Row>
                ))}
              </tbody>
            </Overview>
          </TableArea>
          <ScrollColumn>
            <ScrollHead />
            <ScrollBody><ScrollBar thumb={252} /></ScrollBody>
          </ScrollColumn>
        </OverviewBody>
      </OverviewPane>
    </EditorBody>
  </Editor>
);

const InspectorPanel = () => (
  <Inspector>
    <InspectorHead>
      <InspectorTitle>Slave_1 [Module]</InspectorTitle>
      <InspectorTabs>
        <Tab $width={98} $accent $on><PropertiesIcon />属性</Tab>
        <Tab $width={104} $accent><InfoIcon />信息<InfoBadge /></Tab>
        <Tab $width={98} $accent><DiagnosticsIcon />诊断</Tab>
      </InspectorTabs>
      <InspectorButtons>
        <button aria-label="浮动"><Restore /></button>
        <button aria-label="最小化"><S w={14} h={14}><path d="M1 5h12v6H1z" stroke="#fff" strokeWidth="2" /></S></button>
        <button aria-label="折叠"><S w={14} h={14}><path d="M0 3h14l-7 8z" fill="#fff" /></S></button>
      </InspectorButtons>
    </InspectorHead>
    <TabStrip $height={32} $pad="0 0 0 8px">
      <Tab $width={81} $on>常规</Tab>
      <Tab $width={105}><span><Zh $size={17}>IO </Zh>变量</span></Tab>
      <Tab $width={119}>系统常数</Tab>
      <Tab $width={81}>文本</Tab>
    </TabStrip>
    <InspectorBody>
      <NavList>
        {navItems.map((item, i) => (
          <NavItem key={item}>
            <Marker>{i === 0 && <Triangle />}</Marker>
            <NavLink href="#" $on={i === 1}>{mixed(item, 16)}</NavLink>
          </NavItem>
        ))}
      </NavList>
      <PaneSplitter>
        <SplitSpace />
        <SplitButton aria-label="向左折叠"><SmallTriangle left /></SplitButton>
        <SplitButton aria-label="向右折叠"><SmallTriangle /></SplitButton>
      </PaneSplitter>
      <Form>
        <FormTitle><span>{mixed('PROFIBUS 地址', 19)}</span><Rule /></FormTitle>
        <Group>
          <GroupTitle>接口连接到</GroupTitle>
          <ComboField id="subnet" label="子网" value="PROFIBUS_1" />
          <Field>
            <FieldLabel as="span" />
            <AddSubnet type="button">添加新子网</AddSubnet>
          </Field>
        </Group>
        <Group>
          <GroupTitle>参数</GroupTitle>
          <ComboField id="address" label="地址" value="2" />
          <ComboField id="highest" label="最高地址" value="126" />
          <ComboField id="rate" label="传输率" value="1.5 Mbps" />
          <Field>
            <FieldLabel as="span" />
            <EmptyField />
          </Field>
        </Group>
      </Form>
    </InspectorBody>
  </Inspector>
);

const CatalogPanel = () => (
  <Catalog>
    <CatalogHead>
      <CatalogTitle>硬件目录</CatalogTitle>
      <WindowButtons>
        <button aria-label="浮动"><Restore /></button>
        <button aria-label="列"><S w={14} h={14}><path d="M.5 0v14M3.500 0v14M6 .5h7v13H6zM9.500 0v14" stroke="#fff" /></S></button>
        <button aria-label="收起"><S w={12} h={14}><path d="M3 0l7 7-7 7z" fill="#fff" /></S></button>
      </WindowButtons>
    </CatalogHead>
    <OptionsHead>选项</OptionsHead>
    <OptionsTools>
      <button aria-label="视图"><S w={17} h={20}><path d="M.5 1.500h20v16H.5z" fill="#f2f5ff" stroke="#8c9cdc" /><path d="M0 17h17" stroke="#6878c8" strokeWidth="2" /></S></button>
    </OptionsTools>
    <SectionHead>
      <SectionMark><S w={12} h={8}><path d="M1 1l5 5 5-5" stroke="#111" strokeWidth="2" /></S></SectionMark>
      <SectionName>目录</SectionName>
    </SectionHead>
    <FindRow>
      <FindBox aria-label="搜索目录" />
      <SquareButton aria-label="向下搜索"><FindStep /></SquareButton>
      <SquareButton aria-label="向上搜索" $cut><FindStep up /></SquareButton>
    </FindRow>
    <FilterRow>
      <Check type="checkbox" id="filter" defaultChecked />
      <label htmlFor="filter">过滤</label>
      <ProfileLabel htmlFor="profile">配置文件</ProfileLabel>
      <ComboBox id="profile" value="<全部>" />
      <SquareButton aria-label="管理配置文件" $cut><ProfileIcon /></SquareButton>
    </FilterRow>
    <CatalogBody>
      <CatalogList>
        {catalogItems.map((item, i) => (
          <CatalogItem key={i}>
            <ItemMark>{i === 0 && <Triangle />}</ItemMark>
            {i === 0 ? <FolderIcon /> : <ModuleIcon />}
            <ItemName>{mixed(item, 16)}</ItemName>
          </CatalogItem>
        ))}
      </CatalogList>
      <ScrollBar thumb={362} end />
    </CatalogBody>
    <SectionHead>
      <SectionMark><S w={8} h={12}><path d="M1 1l5 5-5 5" stroke="#111" strokeWidth="2" /></S></SectionMark>
      <SectionName>信息</SectionName>
    </SectionHead>
  </Catalog>
);

export default function App() {
  return (
    <Page>
      <GlobalStyle />
      <TitleBar>
        <TitlePath><span>{mixed('维修验证台\\PLC程序\\PLC程序DDLV19\\项目9\\项目9', 17)}</span></TitlePath>
        <Minimise aria-label="最小化"><S w={12} h={2}><path d="M0 0h12v1H0z" fill="#fff" /></S></Minimise>
      </TitleBar>
      <Top>
        <div>
          <Menu>
            {['(O)', '选项(N)', '工具(T)', '窗口(W)', '帮助(H)'].map((m) => <button key={m}>{mixed(m, 16)}</button>)}
          </Menu>
          <Toolbar>
            <Tools $gap={9}>
              <Tools $gap={4}>
                <button aria-label="撤销"><Undo /></button>
                <button aria-label="撤销列表"><Steps /></button>
              </Tools>
              <Tools $gap={4}>
                <button aria-label="重做"><Undo flip /></button>
                <button aria-label="重做列表"><Steps /></button>
              </Tools>
            </Tools>
            <Sep $before={4} $after={9} />
            <Tools $gap={10}>
              <button aria-label="编译"><Compile /></button>
              <button aria-label="下载"><Transfer /></button>
              <button aria-label="上传"><Transfer up /></button>
              <button aria-label="仿真"><Simulate /></button>
              <button aria-label="启动运行系统"><StartRt /></button>
            </Tools>
            <Sep $before={5} $after={5} />
            <Tools $gap={12}>
              <ToolButton><Plug fill="#f46a2c" edge="#c03a10" />转至在线</ToolButton>
              <ToolButton><Plug fill="#4a5fd0" edge="#2438a0" split />转至离线</ToolButton>
            </Tools>
            <Sep $before={11} $after={8} />
            <Tools $gap={10}>
              <button aria-label="可访问的设备"><Network ask /></button>
              <button aria-label="启动"><Cpu /></button>
              <button aria-label="停止"><Cpu stop /></button>
            </Tools>
            <Sep $before={7} $after={7} />
            <button aria-label="交叉引用"><Cross /></button>
            <Sep $before={6} $after={9} />
            <Tools $gap={10}>
              <button aria-label="水平拆分"><SplitView /></button>
              <button aria-label="垂直拆分"><SplitView vertical /></button>
            </Tools>
            <Sep $before={5} $after={8} />
            <Tools $gap={10}>
              <button aria-label="启用"><Force /></button>
              <button aria-label="禁用"><Force off /></button>
            </Tools>
            <Sep $before={6} $after={7} />
            <ProjectSearch aria-label="在项目中搜索" placeholder="<在项目中搜索>" />
            <button aria-label="搜索"><FindInProject /></button>
          </Toolbar>
        </div>
        <Brand>
          <BrandName>Totally Integrated Automation</BrandName>
          <BrandPortal>PORTA</BrandPortal>
        </Brand>
      </Top>
      <Main>
        <EdgePanel />
        <Centre>
          <EditorPanel />
          <InspectorPanel />
        </Centre>
        <CatalogPanel />
      </Main>
      <TaskBar>
        <Task $bg="#c4c4c4" $width={29} aria-label="总览" />
        <Task $bg="#fff" $width={141} aria-label="Slave_1"><S w={14} h={16}><path d="M4 0h4v6H4z" fill="#4aa8b0" /></S></Task>
        <Task $bg="#c4c4c4" $width={141}><S w={14} h={16}><path d="M0 0h14v14H0z" fill="#e4e8ff" /><path d="M3 3h3M8 3h3" stroke="#7080d0" /></S>在线和诊断</Task>
        <Message>
          <MessageIcon><S w={25} h={20}><path d="M0 0h25v20H0z" fill="#c4c4cc" /><path d="M4 2h8v6H4z" fill="#fff" /><path d="M17 2v6" stroke="#334" strokeWidth="2" /></S></MessageIcon>
          <S w={15} h={20}><circle cx="7" cy="11" r="7" fill="#1018b0" /></S>
          <MessageText>已通过地址</MessageText>
          <MessageText>连接到</MessageText>
        </Message>
      </TaskBar>
      <Watermark aria-hidden="true">
        <MarkZh>西门子工业 技术论坛</MarkZh>
        <MarkUrl>support.industry.siemens.com/cs</MarkUrl>
      </Watermark>
    </Page>
  );
}
